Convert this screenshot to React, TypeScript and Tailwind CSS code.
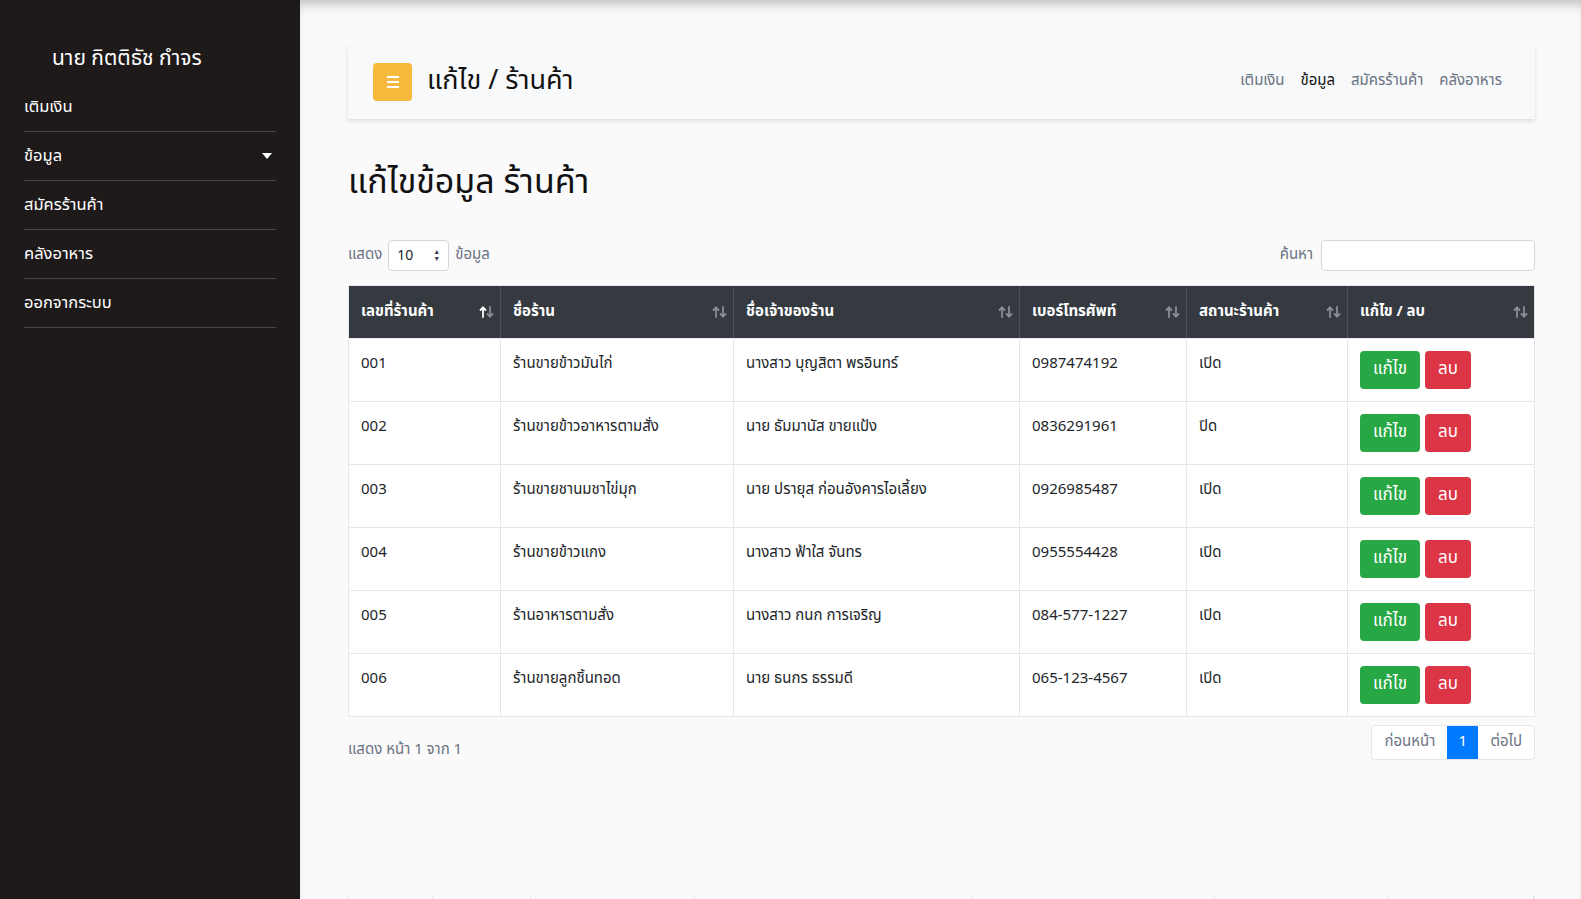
import React from "react";

type Shop = {
  id: string;
  name: string;
  owner: string;
  phone: string;
  status: string;
};

const SHOPS: Shop[] = [
  { id: "001", name: "ร้านขายข้าวมันไก่", owner: "นางสาว บุญสิตา พรอินทร์", phone: "0987474192", status: "เปิด" },
  { id: "002", name: "ร้านขายข้าวอาหารตามสั่ง", owner: "นาย ธัมมานัส ขายแป้ง", phone: "0836291961", status: "ปิด" },
  { id: "003", name: "ร้านขายชานมชาไข่มุก", owner: "นาย ปรายุส ก่อนอังคารไอเลี้ยง", phone: "0926985487", status: "เปิด" },
  { id: "004", name: "ร้านขายข้าวแกง", owner: "นางสาว ฟ้าใส จันทร", phone: "0955554428", status: "เปิด" },
  { id: "005", name: "ร้านอาหารตามสั่ง", owner: "นางสาว กนก การเจริญ", phone: "084-577-1227", status: "เปิด" },
  { id: "006", name: "ร้านขายลูกชิ้นทอด", owner: "นาย ธนกร ธรรมดี", phone: "065-123-4567", status: "เปิด" },
];

const COLUMNS = [
  { label: "เลขที่ร้านค้า", width: "w-[151px]", active: true },
  { label: "ชื่อร้าน", width: "w-[233px]", active: false },
  { label: "ชื่อเจ้าของร้าน", width: "w-[286px]", active: false },
  { label: "เบอร์โทรศัพท์", width: "w-[167px]", active: false },
  { label: "สถานะร้านค้า", width: "w-[161px]", active: false },
  { label: "แก้ไข / ลบ", width: "flex-1", active: false },
];

const MENU = ["เติมเงิน", "ข้อมูล", "สมัครร้านค้า", "คลังอาหาร", "ออกจากระบบ"];

const SortIcon = ({ active }: { active: boolean }) => (
  <svg width="15" height="12" viewBox="0 0 15 12" className="shrink-0">
    <g fill="none" strokeWidth="1.8" strokeLinecap="round" strokeLinejoin="round">
      <g stroke={active ? "#ffffff" : "#8a9096"}>
        <path d="M4 11V1.5" />
        <path d="M1.5 4L4 1.5L6.5 4" />
      </g>
      <g stroke="#8a9096">
        <path d="M11 1V10.5" />
        <path d="M8.5 8L11 10.5L13.5 8" />
      </g>
    </g>
  </svg>
);

const App: React.FC = () => {
  return (
    <div
      className="flex w-full h-[899px] overflow-hidden bg-[#fafafa] text-[#212529]"
      style={{ fontFamily: '"Noto Sans Thai", "Noto Sans", "Liberation Sans", sans-serif' }}
    >
      {/* Sidebar */}
      <div className="w-[300px] shrink-0 bg-[#1e1a1a] text-white px-6 pt-[45px]">
        <div className="pl-7 text-[21px] leading-7 mb-[10px]">นาย กิตติธัช กำจร</div>
        {MENU.map((item) => (
          <div
            key={item}
            className="flex items-center justify-between h-[49px] border-b border-[#4a4545] text-[16.5px]"
          >
            <span>{item}</span>
            {item === "ข้อมูล" && (
              <span className="w-0 h-0 border-l-[5px] border-r-[5px] border-t-[6px] border-l-transparent border-r-transparent border-t-white mr-1" />
            )}
          </div>
        ))}
      </div>

      {/* Main */}
      <div className="flex-1 relative shadow-[inset_0_10px_14px_-8px_rgba(0,0,0,0.3)]">
        <div className="pl-[48px] pr-[47px] pt-[44px]">
          {/* Top bar */}
          <div className="flex items-center justify-between h-[75px] bg-[#f8f9fa] shadow-[0_2px_4px_rgba(0,0,0,0.12)] pl-[25px] pr-[33px]">
            <div className="flex items-center gap-[15px]">
              <button className="w-[39px] h-[38px] rounded-[4px] bg-[#f6b93b] flex flex-col items-center justify-center gap-[3px]">
                <span className="w-[12px] h-[2px] bg-white" />
                <span className="w-[12px] h-[2px] bg-white" />
                <span className="w-[12px] h-[2px] bg-white" />
              </button>
              <span className="text-[27px] text-[#111]">แก้ไข / ร้านค้า</span>
            </div>
            <div className="flex items-center gap-4 text-[15px] text-gray-500">
              <span>เติมเงิน</span>
              <span className="text-[#111]">ข้อมูล</span>
              <span>สมัครร้านค้า</span>
              <span>คลังอาหาร</span>
            </div>
          </div>

          <h1 className="text-[34px] leading-[40px] text-[#111] mt-[44px]">แก้ไขข้อมูล ร้านค้า</h1>

          {/* Controls */}
          <div className="flex items-center justify-between mt-[37px]">
            <div className="flex items-center gap-[6px] text-[15px] text-gray-500">
              <span>แสดง</span>
              <div className="w-[61px] h-[31px] bg-white border border-gray-300 rounded-[4px] flex items-center justify-between pl-2 pr-2 text-[14px] text-[#212529]">
                <span>10</span>
                <span className="flex flex-col items-center leading-none text-[7px] text-gray-700">
                  <span>▲</span>
                  <span>▼</span>
                </span>
              </div>
              <span>ข้อมูล</span>
            </div>
            <div className="flex items-center gap-2 text-[15px] text-gray-500">
              <span>ค้นหา</span>
              <input className="w-[214px] h-[31px] bg-white border border-gray-300 rounded-[4px]" />
            </div>
          </div>

          {/* Table */}
          <div className="mt-[14px] border border-gray-200 bg-white">
            <div className="flex h-[52px] bg-[#343a40] text-white text-[15px] font-bold">
              {COLUMNS.map((col, i) => (
                <div
                  key={col.label}
                  className={`${col.width} shrink-0 flex items-center justify-between pl-3 pr-[6px] ${i > 0 ? "border-l border-[#4b5157]" : ""}`}
                >
                  <span>{col.label}</span>
                  <SortIcon active={col.active} />
                </div>
              ))}
            </div>
            {SHOPS.map((shop) => (
              <div key={shop.id} className="flex h-[63px] border-t border-gray-200 text-[15px]">
                <div className="w-[151px] shrink-0 pl-3 pt-[14px]">{shop.id}</div>
                <div className="w-[233px] shrink-0 pl-3 pt-[14px] border-l border-gray-200">{shop.name}</div>
                <div className="w-[286px] shrink-0 pl-3 pt-[14px] border-l border-gray-200">{shop.owner}</div>
                <div className="w-[167px] shrink-0 pl-3 pt-[14px] border-l border-gray-200">{shop.phone}</div>
                <div className="w-[161px] shrink-0 pl-3 pt-[14px] border-l border-gray-200">{shop.status}</div>
                <div className="flex-1 pl-3 pt-[12px] border-l border-gray-200 flex items-start gap-[5px]">
                  <button className="w-[60px] h-[38px] rounded-[4px] bg-[#28a745] text-white text-[17px]">แก้ไข</button>
                  <button className="w-[46px] h-[38px] rounded-[4px] bg-[#dc3545] text-white text-[17px]">ลบ</button>
                </div>
              </div>
            ))}
          </div>

          {/* Footer */}
          <div className="flex items-start justify-between mt-[8px]">
            <span className="text-[15px] text-gray-500 mt-[14px]">แสดง หน้า 1 จาก 1</span>
            <div className="flex h-[35px] border border-gray-200 rounded-[4px] overflow-hidden text-[15px] bg-white">
              <span className="px-3 flex items-center text-gray-500">ก่อนหน้า</span>
              <span className="w-[31px] flex items-center justify-center bg-[#007bff] text-white">1</span>
              <span className="px-3 flex items-center text-gray-500">ต่อไป</span>
            </div>
          </div>

          {/* Next block edge */}
          <div className="flex h-[20px] mt-[134px] ml-[-1px]">
            <div className="w-[85px] border-l border-gray-200" />
            <div className="w-[98px] border-l border-gray-200" />
            <div className="w-[164px] border-l border-gray-200" />
            <div className="w-[278px] border-l border-gray-200" />
            <div className="w-[242px] border-l border-gray-200" />
            <div className="w-[174px] border-l border-gray-200" />
            <div className="w-[145px] border-l border-gray-200" />
            <div className="flex-1 border-l border-r border-gray-200" />
          </div>
        </div>
      </div>
    </div>
  );
};

export default App;
